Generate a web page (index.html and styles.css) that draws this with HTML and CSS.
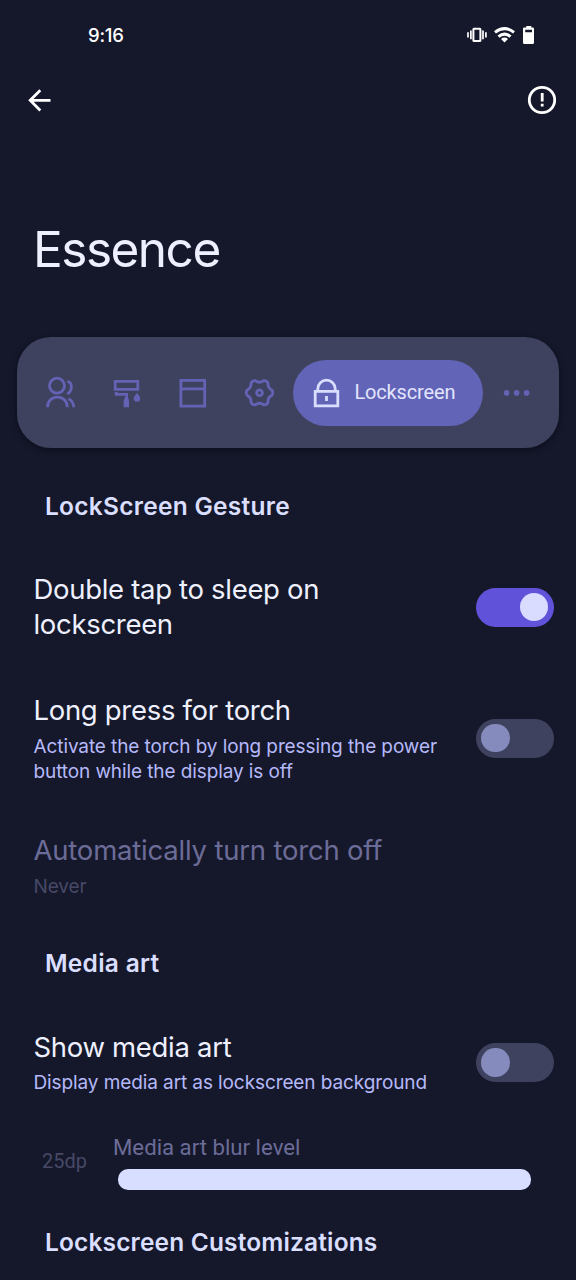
FILE: index.html
```html
<!DOCTYPE html>
<html lang="en">
<head>
<meta charset="utf-8">
<title>Essence</title>
<link rel="stylesheet" href="styles.css">
</head>
<body>
<header class="status">
  <span class="clock">9:16</span>
  <svg class="status-icons" viewBox="466 24 70 22" width="70" height="22">
    <g fill="none" stroke="#fff" stroke-width="2">
      <rect x="473.4" y="28.7" width="7" height="12.4" rx=".6"/>
      <path d="M470.9 30.5v8.8M483 30.5v8.8M468 32.3v5.2M485.9 32.3v5.2" stroke-width="1.7"/>
    </g>
    <g fill="none" stroke="#fff" stroke-width="3.1">
      <path d="M495 32.4Q504.5 24.800 514 32.4"/>
      <path d="M498.5 36.600Q504.5 31.600 510.5 36.600"/>
    </g>
    <path d="M501 38.9Q504.500 36.200 508 38.900L504.500 42.600Z" fill="#fff"/>
    <path fill="#fff" fill-rule="evenodd" d="M526.300 26h5v1.500h1.400q1.300 0 1.300 1.300v13.600q0 1.600-1.300 1.600h-8.400q-1.300 0-1.300-1.600v-13.600q0-1.300 1.300-1.300h2zM525.200 29.800v2.400h6.800v-2.400z"/>
  </svg>
</header>
<nav class="toolbar">
  <svg viewBox="26 86 28 28" width="28" height="28" fill="none" stroke="#fff" stroke-width="2.8"><path d="M50.500 100.300H30M40.300 90.300L30.200 100.300L40.300 110.500"/></svg>
  <svg viewBox="527 85 30 30" width="30" height="30" fill="none" stroke="#fff" stroke-width="2.800"><circle cx="542" cy="100" r="12.700"/><path d="M542.200 93v8.400M542.200 103.800v2.800"/></svg>
</nav>
<h1 class="title">Essence</h1>
<nav class="tabs">
  <a class="tab"><svg viewBox="40 372.900 40 40" width="40" height="40"><circle cx="57" cy="385.600" r="7.500"/><path d="M47.600 407.200v-.8a9.800 9.400 0 0 1 19.600 0v.8M67.400 381.200Q71.800 382 71.300 388Q70.900 392 67.200 393.700M68.500 398.600Q73.500 401 73.700 407.200"/></svg></a>
  <a class="tab"><svg viewBox="107 372.900 40 40" width="40" height="40"><path d="M115.200 381.300h22.600v8h-22.600zM116.200 392v2.300h10.400v4"/><path class="solid" d="M124.600 398h3.600q.8 1.500.8 3v6.200h-5.300V401q0-1.500.9-3zM137 392.800q3.300 3.800 3.300 5.600a3.300 3.100 0 0 1-6.600 0q0-1.800 3.300-5.600z"/></svg></a>
  <a class="tab"><svg viewBox="173.300 372.900 40 40" width="40" height="40"><path d="M181.200 380.200h23.800v25.800h-23.800zM181.200 388.700h23.800"/></svg></a>
  <a class="tab"><svg viewBox="-19.500 -19.700 40 40" width="40" height="40"><path d="M12.500-2.500Q14 0 12.500 2.500Q8 4.700 8.500 9.600Q7 12.400 4.200 12.100Q0 8.900-4.200 12.100Q-7 12.400-8.500 9.600Q-8 4.700-12.500 2.500Q-14 0-12.500-2.500Q-8-4.700-8.500-9.600Q-7-12.400-4.200-12.100Q0-8.900 4.200-12.100Q7-12.400 8.500-9.600Q8-4.700 12.500-2.500Z"/><circle r="2.900"/></svg></a>
  <a class="tab active"><svg viewBox="306 372.900 40 40" width="40" height="40"><path d="M315.200 391.300h22.600v14.400h-22.600zM317.800 391v-2.300a8.700 8.700 0 0 1 17.400 0v2.300M326.500 396v5"/></svg><span class="tab-label">Lockscreen</span></a>
  <a class="tab"><svg viewBox="496.900 372.900 40 40" width="40" height="40"><g class="solid"><circle cx="506.500" cy="392.800" r="2.800"/><circle cx="516.500" cy="392.800" r="2.800"/><circle cx="526.500" cy="392.800" r="2.800"/></g></svg></a>
</nav>
<main>
  <h2 class="category">LockScreen Gesture</h2>
  <section class="pref pref-sleep">
    <div class="text"><p class="name">Double tap to sleep on<br>lockscreen</p></div>
    <div class="switch on"><i class="thumb"></i></div>
  </section>
  <section class="pref pref-torch">
    <div class="text"><p class="name">Long press for torch</p>
    <p class="summary">Activate the torch by long pressing the power<br>button while the display is off</p></div>
    <div class="switch"><i class="thumb"></i></div>
  </section>
  <section class="pref pref-auto disabled">
    <div class="text"><p class="name">Automatically turn torch off</p><p class="summary">Never</p></div>
  </section>
  <h2 class="category category-media">Media art</h2>
  <section class="pref pref-art">
    <div class="text"><p class="name">Show media art</p><p class="summary">Display media art as lockscreen background</p></div>
    <div class="switch"><i class="thumb"></i></div>
  </section>
  <section class="blur">
    <span class="value">25dp</span>
    <div class="slider"><p class="slider-label">Media art blur level</p><div class="track"></div></div>
  </section>
  <h2 class="category category-custom">Lockscreen Customizations</h2>
</main>
</body>
</html>
```
FILE: styles.css
```css
* { box-sizing: border-box; }
body { margin: 0; width: 576px; height: 1280px; overflow: hidden; background: #15182a; color: #eef0ff; font-family: Inter, "Open Sans", sans-serif; }
h1, h2, p { margin: 0; font-weight: 400; white-space: nowrap; }
svg { display: block; flex: none; }
.status { height: 70px; padding: 0 40px 0 88px; display: flex; align-items: center; justify-content: space-between; }
.clock { font-size: 18.5px; font-weight: 500; letter-spacing: -.2px; color: #fff; }
.toolbar { height: 60px; padding: 0 19px 0 26px; display: flex; align-items: center; justify-content: space-between; }
.title { height: 207px; padding: 89px 0 0 33px; font-size: 49.5px; line-height: 60px; letter-spacing: -1.5px; }
.tabs { width: 542px; height: 111px; margin-left: 17px; padding: 0 9px 0 10px; border-radius: 34px; background: #3f425f; box-shadow: 0 2px 6px rgba(5, 6, 18, .55); display: flex; align-items: center; }
.tab { flex: 1; height: 66px; display: flex; align-items: center; justify-content: center; fill: none; stroke: #6462b5; stroke-width: 2.8; }
.solid { fill: #6462b5; stroke: none; }
.tab.active { flex: 0 0 190px; justify-content: flex-start; padding-left: 13px; gap: 8px; border-radius: 33px; background: #6264b7; stroke: #d9deff; }
.tab-label { padding-bottom: 1px; color: #e2e5ff; font: 20px/26px Roboto, sans-serif; letter-spacing: -.15px; }
.category { height: 30px; margin: 43px 0 0 45px; font-size: 24.5px; line-height: 30px; letter-spacing: .27px; font-weight: 600; color: #dadeff; }
.pref { display: flex; justify-content: space-between; align-items: center; padding: 0 22px 0 33.500px; }
.name { font-size: 27.5px; line-height: 35px; letter-spacing: -.31px; }
.summary { margin-top: 6px; margin-bottom: -1px; font-size: 19px; line-height: 25px; letter-spacing: -.1px; color: #b5b9fa; }
.pref-sleep { margin-top: 51px; height: 70px; }
.pref-torch { margin-top: 51px; height: 90px; }
.pref-auto { margin-top: 50px; height: 65px; }
.pref-auto .name { letter-spacing: -.2px; }
.category-media { margin-top: 50px; }
.pref-art { margin-top: 52px; height: 65px; }
.pref-art .summary { margin-top: 5px; margin-bottom: 0; }
.disabled .name { color: #6c6c98; }
.disabled .summary { color: #474867; }
.switch { width: 78px; height: 39px; padding: 5px; border-radius: 20px; background: #3f425f; display: flex; align-items: center; }
.thumb { width: 28.5px; height: 28.5px; border-radius: 50%; background: #858bbd; }
.switch.on { justify-content: flex-end; padding-right: 6px; background: #6152da; }
.on .thumb { background: #dadcff; }
.blur { margin-top: 37px; height: 59px; display: flex; padding-left: 42px; font-family: Roboto, sans-serif; }
.value { width: 71px; padding-top: 17px; font-size: 20px; line-height: 24px; color: #474867; }
.slider-label { font-size: 22.2px; line-height: 30px; color: #6c6c98; }
.track { width: 413px; height: 21px; margin: 7px 0 0 5px; border-radius: 10px; background: #d8deff; }
.category-custom { margin-top: 36px; letter-spacing: .15px; }
```
